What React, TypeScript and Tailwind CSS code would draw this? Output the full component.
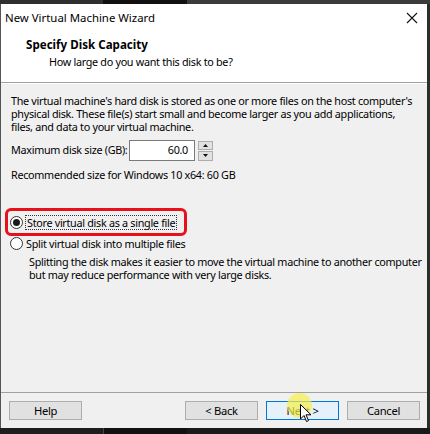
import { useState } from "react";

function Radio({ checked }: { checked: boolean }) {
  return (
    <span className="w-[13px] h-[13px] rounded-full border border-[#333] bg-white flex items-center justify-center shrink-0">
      {checked && <span className="w-[7px] h-[7px] rounded-full bg-[#1a1a1a]" />}
    </span>
  );
}

function Btn({ label, primary }: { label: string; primary?: boolean }) {
  return (
    <button
      className={
        "w-[73px] h-[19px] text-[11.2px] leading-none text-black border " +
        (primary ? "border-[#0078d7] bg-[#e5f1fb]" : "border-[#adadad] bg-[#e1e1e1]")
      }
    >
      {label}
    </button>
  );
}

export default function App() {
  const [single, setSingle] = useState(true);
  const [size] = useState("60.0");

  return (
    <div className="w-[430px] h-[434px] bg-[#2d2d2d] flex flex-col overflow-hidden font-['Noto_Sans',sans-serif] text-[10.8px] tracking-[-0.3px] text-black relative whitespace-nowrap">
      <div className="h-[4px] flex shrink-0">
        <div className="w-[103px] bg-[#2f2f2f]" />
        <div className="w-[84px] bg-[#111]" />
        <div className="flex-1 bg-[#3b3b3b]" />
      </div>

      <div className="w-[427px] h-[424px] flex flex-col border-l border-[#555] shrink-0">
        {/* title bar */}
        <div className="h-[27px] bg-white flex items-center justify-between pl-[4px] pr-[9px]">
          <span className="text-[11.4px] tracking-normal">New Virtual Machine Wizard</span>
          <svg width="12" height="12" viewBox="0 0 12 12">
            <path d="M1 1 L11 11 M11 1 L1 11" stroke="#111" strokeWidth="1.1" />
          </svg>
        </div>

        {/* header */}
        <div className="h-[51px] bg-white flex flex-col pt-[5px]">
          <div className="pl-[25px] font-bold text-[11.6px] tracking-normal leading-[17px]">Specify Disk Capacity</div>
          <div className="pl-[48px] leading-[17px]">How large do you want this disk to be?</div>
        </div>
        <div className="h-[1px] bg-[#a0a0a0]" />
        <div className="h-[1px] bg-white" />

        {/* body */}
        <div className="flex-1 bg-[#f0f0f0] flex flex-col px-[10px] pt-[10px]">
          <p className="leading-[13px]">
            The virtual machine's hard disk is stored as one or more files on the host computer's
            <br />
            physical disk. These file(s) start small and become larger as you add applications,
            <br />
            files, and data to your virtual machine.
          </p>

          <div className="flex items-center mt-[7px] h-[21px]">
            <span className="w-[118px]">Maximum disk size (GB):</span>
            <div className="w-[66px] h-[21px] bg-white border border-[#7a7a7a] flex items-center justify-end pr-[6px]">
              {size}
            </div>
            <div className="ml-[3px] w-[15px] h-[20px] flex flex-col gap-[1px]">
              <div className="flex-1 bg-[#e1e1e1] border border-[#adadad] flex items-center justify-center">
                <svg width="5" height="3" viewBox="0 0 5 3"><path d="M0 3 L2.5 0 L5 3Z" fill="#111" /></svg>
              </div>
              <div className="flex-1 bg-[#e1e1e1] border border-[#adadad] flex items-center justify-center">
                <svg width="5" height="3" viewBox="0 0 5 3"><path d="M0 0 L2.5 3 L5 0Z" fill="#111" /></svg>
              </div>
            </div>
          </div>

          <div className="mt-[7px] leading-[14px]">Recommended size for Windows 10 x64: 60 GB</div>

          <div className="mt-[26px] -ml-[6px] w-[182px] h-[28px] border-[3px] border-[#e8101a] rounded-[6px] flex items-center pl-[2px]">
            <label className="flex items-center gap-[3px] cursor-default" onClick={() => setSingle(true)}>
              <Radio checked={single} />
              <span className="outline outline-1 outline-dotted outline-[#333] leading-[13px] px-[1px]">
                Store virtual disk as a single file
              </span>
            </label>
          </div>

          <label className="flex items-center gap-[3px] -ml-[1px] h-[14px]" onClick={() => setSingle(false)}>
            <Radio checked={!single} />
            <span className="leading-[13px]">Split virtual disk into multiple files</span>
          </label>

          <p className="pl-[18px] mt-[5px] leading-[13px]">
            Splitting the disk makes it easier to move the virtual machine to another computer
            <br />
            but may reduce performance with very large disks.
          </p>
        </div>

        <div className="h-[1px] bg-[#a0a0a0]" />
        <div className="h-[35px] bg-[#f0f0f0] flex items-start pt-[8px] pl-[8px] pr-[7px]">
          <Btn label="Help" />
          <div className="flex-1" />
          <div className="flex gap-[8px]">
            <Btn label="< Back" />
            <Btn label="Next >" primary />
            <Btn label="Cancel" />
          </div>
        </div>
      </div>

      <div className="flex-1 flex">
        <div className="w-[103px] bg-[#1e1e1e]" />
        <div className="w-[84px] bg-[#111] border-l border-[#444]" />
        <div className="flex-1 bg-[#1a1a1a]" />
      </div>

      {/* click highlight + cursor */}
      <div className="absolute left-[287px] top-[393px] w-[25px] h-[25px] rounded-full bg-[#f7ef4a]/70 pointer-events-none" />
      <svg className="absolute left-[300px] top-[404px] pointer-events-none" width="12" height="19" viewBox="0 0 12 19">
        <path d="M0.5 0.5 L0.5 15 L4 11.5 L6.5 17.5 L8.5 16.6 L6 10.8 L11 10.8 Z" fill="#fff" stroke="#000" strokeWidth="1" />
      </svg>
    </div>
  );
}
